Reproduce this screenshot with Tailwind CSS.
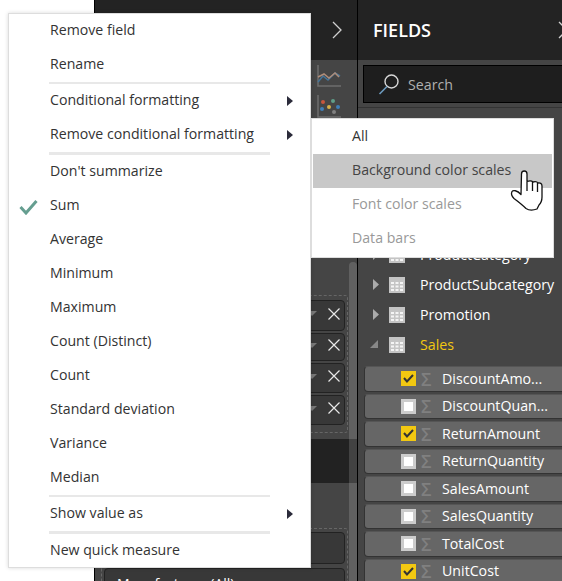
<!DOCTYPE html>
<html lang="en">
<head>
  <meta charset="UTF-8">
  <title>Field menu</title>
  <script src="https://cdn.jsdelivr.net/npm/@tailwindcss/browser@4"></script>
</head>
<body class="bg-white">
  <div class="relative flex w-[562px] h-[581px] overflow-hidden font-['Open_Sans',sans-serif]">
    <!-- report canvas -->
    <div class="w-[94px] bg-white shrink-0"></div>

    <!-- visualizations pane -->
    <div class="relative w-[264px] shrink-0 border-x border-black flex flex-col bg-[#454545]">
      <div class="h-[60px] bg-[#232323] flex items-center justify-end pr-[14px] shrink-0">
        <svg width="12" height="18" viewBox="0 0 12 18" fill="none" stroke="#d0d0d0" stroke-width="1.3"><path d="M2 1l8 8-8 8"/></svg>
      </div>
      <div class="pl-[221px] pt-[4px] h-[60px] shrink-0">
        <svg width="26" height="24" viewBox="0 0 26 24" fill="none">
          <path d="M2 1v21h23" stroke="#6e6e6e" stroke-width="1.500"/>
          <path d="M2 18l5-6 5 4 7-7 5 3" stroke="#44759a" stroke-width="1.500"/>
          <path d="M2 13l6-3 5 4 6-5 4 4" stroke="#ad8c79" stroke-width="1.500"/>
        </svg>
        <svg class="mt-[7px]" width="26" height="24" viewBox="0 0 26 24" fill="none">
          <path d="M2 0v22h23" stroke="#6e6e6e" stroke-width="1.500"/>
          <circle cx="7" cy="7" r="2" fill="#c9573c"/><circle cx="17" cy="6" r="2" fill="#5f9f8a"/>
          <circle cx="6" cy="14" r="2" fill="#3f7fb8"/><circle cx="13" cy="12" r="2" fill="#d6b14a"/>
          <circle cx="22" cy="12" r="2" fill="#3f7fb8"/><circle cx="18" cy="17" r="2" fill="#808080"/>
        </svg>
      </div>
      <div class="mt-[175px] ml-[6px] mr-[9px] h-[138px] border border-dashed border-[#666] rounded-[3px] px-[2px] pt-[4px] flex flex-col gap-[2px] shrink-0">
        <div class="h-[31px] shrink-0 rounded-[4px] border border-[#222] bg-[#383838] flex items-center justify-end gap-[11px] pr-[4px] pb-[4px]"><span class="w-0 h-0 border-x-[5px] border-x-transparent border-t-[5px] border-t-[#777]"></span><svg width="12" height="12" viewBox="0 0 12 12" stroke="#e8e8e8" stroke-width="1.200"><path d="M.5.5l11 11M11.500.5l-11 11"/></svg></div>
        <div class="h-[28px] shrink-0 rounded-[4px] border border-[#222] bg-[#383838] flex items-center justify-end gap-[11px] pr-[4px] pb-[4px]"><span class="w-0 h-0 border-x-[5px] border-x-transparent border-t-[5px] border-t-[#777]"></span><svg width="12" height="12" viewBox="0 0 12 12" stroke="#e8e8e8" stroke-width="1.200"><path d="M.5.5l11 11M11.500.5l-11 11"/></svg></div>
        <div class="h-[30px] shrink-0 rounded-[4px] border border-[#222] bg-[#383838] flex items-center justify-end gap-[11px] pr-[4px] pb-[4px]"><span class="w-0 h-0 border-x-[5px] border-x-transparent border-t-[5px] border-t-[#777]"></span><svg width="12" height="12" viewBox="0 0 12 12" stroke="#e8e8e8" stroke-width="1.200"><path d="M.5.5l11 11M11.500.5l-11 11"/></svg></div>
        <div class="h-[30px] shrink-0 rounded-[4px] border border-[#222] bg-[#383838] flex items-center justify-end gap-[11px] pr-[4px] pb-[4px]"><span class="w-0 h-0 border-x-[5px] border-x-transparent border-t-[5px] border-t-[#777]"></span><svg width="12" height="12" viewBox="0 0 12 12" stroke="#e8e8e8" stroke-width="1.200"><path d="M.5.5l11 11M11.500.5l-11 11"/></svg></div>
      </div>
      <div class="mt-[6px] h-[44px] bg-[#222] shrink-0"></div>
      <div class="mt-[45px] ml-[6px] mr-[9px] border border-dashed border-b-0 border-[#666] rounded-t-[3px] px-[2px] pt-[3px] flex flex-col gap-[4px] shrink-0">
        <div class="h-[32px] shrink-0 rounded-[4px] border border-[#222] bg-[#383838]"></div>
        <div class="h-[32px] shrink-0 rounded-[4px] border border-[#222] bg-[#383838] pl-[12px] pt-[4px] text-white text-[14px] leading-[22px]">Manufacturer (All)</div>
      </div>
      <div class="absolute right-0 top-[262px] bottom-0 w-[8px] rounded-t-[4px] bg-white/15"></div>
    </div>

    <!-- fields pane -->
    <div class="flex-1 min-w-0 bg-[#454545] flex flex-col">
      <div class="h-[60px] bg-[#232323] flex items-center pl-[15px] justify-between shrink-0">
        <span class="text-white text-[18px] font-semibold">FIELDS</span>
        <svg class="-mr-[7px]" width="12" height="18" viewBox="0 0 12 18" fill="none" stroke="#d0d0d0" stroke-width="1.300"><path d="M2 1l8 8-8 8"/></svg>
      </div>
      <div class="h-[48px] border-b border-[#333] pl-[5px] pt-[5px] shrink-0">
        <div class="h-[38px] -mr-[4px] bg-[#1e1e1e] border border-black flex items-center pl-[14px] gap-[8px]">
          <svg width="22" height="22" viewBox="0 0 22 22" fill="none"><circle cx="13.500" cy="8.500" r="6.500" stroke="#d8d8d8" stroke-width="1.400"/><path d="M9 13.500L1.500 21" stroke="#6d9cc0" stroke-width="1.600"/></svg>
          <span class="text-[#b0b0b0] text-[14.2px] pt-[1px]">Search</span>
        </div>
      </div>
      <div id="tables" class="pt-[132px] flex flex-col shrink-0"></div>
      <div id="fields" class="pl-[6px] mt-[6px] flex flex-col gap-[2px] shrink-0"></div>
    </div>

    <!-- field context menu -->
    <div id="menu" class="absolute left-[8px] top-[13px] w-[303px] h-[555px] bg-white border border-[#ddd] shadow-[0_0_4px_rgba(0,0,0,0.15)] text-[#333] text-[14.15px]"></div>

    <!-- submenu -->
    <div class="absolute left-[311px] top-[118px] w-[243px] h-[140px] bg-white border border-[#ddd] p-px text-[14.15px]">
      <div class="h-[34px] pl-[39px] pb-[3px] flex items-center text-[#333]">All</div>
      <div class="h-[34px] pl-[39px] pb-[3px] flex items-center text-[#444] bg-[#c8c8c8]">Background color scales</div>
      <div class="h-[34px] pl-[39px] pb-[3px] flex items-center text-[#999]">Font color scales</div>
      <div class="h-[34px] pl-[39px] pb-[3px] flex items-center text-[#999]">Data bars</div>
    </div>

    <!-- mouse pointer -->
    <svg class="absolute left-[500px] top-[160px]" width="60" height="60" viewBox="0 0 60 60" fill="#fff" stroke="#111" stroke-width="1.300" stroke-linejoin="round">
      <path d="M21.500 14c0-4 5.500-4 5.500 0v7.500c3-1 5-.5 6 .5 2-.5 4-.5 5 1 2-.5 4 .5 4 3v11c0 4-1 6-3 8l-2 4c-4 1.500-8 1.500-11-.5-3-3-8-7-12-10-2-2-3-5-2-7 1-1.500 5-1.500 9 3z"/>
      <path d="M27 22v9M32.500 22v9M37.500 23v9" fill="none"/>
    </svg>
  </div>

  <script>
    const arrow = `<svg class="absolute left-[278px] top-[12px]" width="6" height="10" viewBox="0 0 6 10"><path d="M0 0l6 5-6 5z" fill="#2b2b3a"/></svg>`;
    const sep = (h, extra) => `<div class="ml-[40px] w-[221px] ${h} ${extra}"></div>`;
    const row = (label, opts = {}) => `<div class="relative h-[34px] pl-[41px] pb-[3px] flex items-center">${opts.check ? `<svg class="absolute left-[10px] top-[10px]" width="19" height="16" viewBox="0 0 19 16" fill="none"><path d="M1.500 8l5.500 6L17.500 2" stroke="#659e90" stroke-width="3"/></svg>` : ''}${label}${opts.sub ? arrow : ''}</div>`;

    document.getElementById('menu').innerHTML = [
      row('Remove field'), row('Rename'),
      sep('h-[2px]', 'bg-[#e8e8e8]'),
      row('Conditional formatting', { sub: true }), row('Remove conditional formatting', { sub: true }),
      sep('h-[3px]', 'bg-[#e8e8e8]'),
      row("Don't summarize"), row('Sum', { check: true }), row('Average'), row('Minimum'), row('Maximum'),
      row('Count (Distinct)'), row('Count'), row('Standard deviation'), row('Variance'), row('Median'),
      sep('h-[2px]', 'bg-[#e8e8e8]'),
      row('Show value as', { sub: true }),
      sep('h-[3px]', 'bg-[#e8e8e8]'),
      row('New quick measure')
    ].join('');

    const tableIcon = `<svg class="shrink-0" width="16" height="16" viewBox="0 0 16 16"><rect width="16" height="16" fill="#c4c4c4"/><path d="M2 5h3v2H2zM6.500 5h3v2h-3zM11 5h3v2h-3zM2 8.500h3v2H2zM6.500 8.500h3v2h-3zM11 8.500h3v2h-3zM2 12h3v2H2zM6.500 12h3v2h-3zM11 12h3v2h-3z" fill="#f4f4f4"/></svg>`;
    const tables = [['ProductCategory', 0], ['ProductSubcategory', 0], ['Promotion', 0], ['Sales', 1]];
    document.getElementById('tables').innerHTML = tables.map(([name, open]) => `
      <div class="h-[30px] flex items-center relative pl-[31px] gap-[15px]">
        ${open
          ? `<svg class="absolute left-[12px] top-[10px]" width="8" height="8" viewBox="0 0 8 8"><path d="M8 0v8H0z" fill="#888"/></svg>`
          : `<svg class="absolute left-[15px] top-[9px]" width="6" height="11" viewBox="0 0 6 11"><path d="M0 0l6 5.500L0 11z" fill="#aaa"/></svg>`}
        ${tableIcon}
        <span class="text-[14.2px] whitespace-nowrap ${open ? 'text-[#f2c811]' : 'text-white'}">${name}</span>
      </div>`).join('');

    const fields = [['DiscountAmo...', 1], ['DiscountQuan...', 0], ['ReturnAmount', 1], ['ReturnQuantity', 0], ['SalesAmount', 0], ['SalesQuantity', 0], ['TotalCost', 0], ['UnitCost', 1]];
    document.getElementById('fields').innerHTML = fields.map(([name, on]) => `
      <div class="h-[25.500px] shrink-0 -mr-[6px] rounded-[4px] border border-[#333] border-t-[#555] bg-[#666] flex items-center pl-[36px]">
        ${on
          ? `<span class="w-[15px] h-[15px] bg-[#f2c811] flex items-center justify-center shrink-0"><svg width="11" height="9" viewBox="0 0 11 9" fill="none"><path d="M1 4l3 3.500L10 1" stroke="#333" stroke-width="2"/></svg></span>`
          : `<span class="w-[15px] h-[15px] bg-white border-[3px] border-[#ccc] shrink-0"></span>`}
        <span class="w-[12px] ml-[5px] text-[#808080] font-semibold text-[18px] leading-none shrink-0">&Sigma;</span>
        <span class="ml-[9px] pb-[1px] text-white text-[14.2px] whitespace-nowrap">${name}</span>
      </div>`).join('');
  </script>
</body>
</html>
